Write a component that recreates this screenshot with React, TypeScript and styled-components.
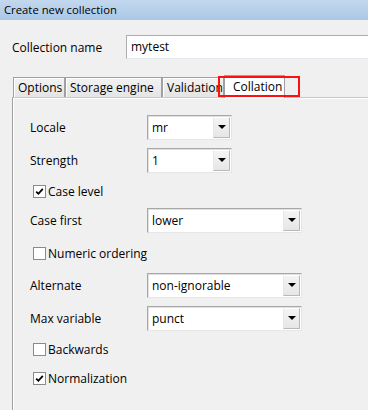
import React from "react";
import styled, { createGlobalStyle } from "styled-components";

const GlobalStyle = createGlobalStyle`
  html, body { margin: 0; padding: 0; background: #ffffff; }
  body { font-family: "Open Sans", "Liberation Sans", Arial, sans-serif; color: #000; }
`;

const Window = styled.div`
  width: 368px;
  height: 410px;
  background: #f0f0f0;
  overflow: hidden;
  font-size: 12px;
`;

const TitleBar = styled.div`
  height: 20px;
  line-height: 19px;
  padding-left: 4px;
  font-size: 11.3px;
  background: linear-gradient(#c3d8ee, #aac7e6);
`;

const NameRow = styled.div`
  display: flex;
  align-items: center;
  margin-top: 15px;
  height: 24px;
  padding-left: 12px;
`;

const NameLabel = styled.span`
  width: 114px;
  flex: none;
`;

const TextInput = styled.div`
  flex: none;
  width: 270px;
  height: 22px;
  line-height: 22px;
  padding-left: 4px;
  background: #fff;
  border: 1px solid;
  border-color: #abadb3 #e3e9ef #e3e9ef #abadb3;
`;

const TabArea = styled.div`
  margin-top: 16px;
`;

const TabStrip = styled.div`
  position: relative;
  display: flex;
  align-items: flex-end;
  height: 22px;
  padding-left: 13px;
`;

const Tab = styled.div<{ $w: number; $active?: boolean }>`
  box-sizing: border-box;
  flex: none;
  width: ${(p) => p.$w}px;
  height: ${(p) => (p.$active ? 23 : 20)}px;
  margin-bottom: ${(p) => (p.$active ? -1 : 0)}px;
  padding: ${(p) => (p.$active ? "2px 0 0 8px" : "1px 0 0 4px")};
  line-height: 17px;
  white-space: nowrap;
  overflow: hidden;
  border: 1px solid #a0a0a0;
  border-bottom: none;
  background: ${(p) => (p.$active ? "#ffffff" : "linear-gradient(#f3f3f3, #e4e4e4)")};
  box-shadow: ${(p) => (p.$active ? "none" : "inset 1px 1px 0 #ffffff")};
  position: relative;
  z-index: ${(p) => (p.$active ? 2 : 1)};
`;

const Highlight = styled.div`
  position: absolute;
  left: 218px;
  top: 1px;
  width: 82px;
  height: 21px;
  box-sizing: border-box;
  border: 2px solid #ff1010;
  z-index: 3;
  pointer-events: none;
`;

const Pane = styled.div`
  margin-left: 12px;
  width: 400px;
  height: 320px;
  border: 1px solid #a0a0a0;
  border-top-color: #c8c8c8;
  box-shadow: inset 1px 1px 0 #ffffff;
  padding: 17px 0 0 17px;
`;

const Row = styled.div<{ $gap: number }>`
  display: flex;
  align-items: center;
  height: 24px;
  margin-top: ${(p) => p.$gap}px;
`;

const FieldLabel = styled.span`
  width: 117px;
  flex: none;
`;

const Combo = styled.div<{ $w: number }>`
  box-sizing: border-box;
  width: ${(p) => p.$w}px;
  height: 25px;
  display: flex;
  align-items: stretch;
  background: #fff;
  border: 1px solid;
  border-color: #a8a8a8 #e6e6e6 #e6e6e6 #a8a8a8;
  box-shadow: inset 1px 1px 0 #e0e0e0;
`;

const ComboText = styled.span`
  flex: 1;
  padding-left: 4px;
  line-height: 23px;
`;

const ComboButton = styled.span`
  width: 15px;
  margin: 1px 1px 1px 0;
  background: linear-gradient(#f4f4f4, #e6e6e6);
  border: 1px solid;
  border-color: #ffffff #b8b8b8 #b8b8b8 #e8e8e8;
  display: flex;
  align-items: center;
  justify-content: center;
`;

const Arrow = styled.span`
  width: 0;
  height: 0;
  border-left: 4px solid transparent;
  border-right: 4px solid transparent;
  border-top: 4px solid #000;
`;

const CheckRow = styled(Row)`
  padding-left: 3px;
`;

const Box = styled.span`
  box-sizing: border-box;
  width: 13px;
  height: 13px;
  margin-right: 2px;
  background: #fff;
  border: 1px solid #8a8a8a;
  display: flex;
  align-items: center;
  justify-content: center;
`;

const ComboField = ({ label, value, width, gap }: { label: string; value: string; width: number; gap: number }) => (
  <Row $gap={gap}>
    <FieldLabel>{label}</FieldLabel>
    <Combo $w={width}>
      <ComboText>{value}</ComboText>
      <ComboButton>
        <Arrow />
      </ComboButton>
    </Combo>
  </Row>
);

const Check = ({ label, checked, gap }: { label: string; checked?: boolean; gap: number }) => (
  <CheckRow $gap={gap}>
    <Box>
      {checked && (
        <svg width="9" height="9" viewBox="0 0 9 9">
          <path d="M1.2 4.6 L3.4 6.8 L7.8 1.8" fill="none" stroke="#000" strokeWidth="1.8" />
        </svg>
      )}
    </Box>
    <span>{label}</span>
  </CheckRow>
);

export default function App() {
  return (
    <>
      <GlobalStyle />
      <Window>
        <TitleBar>Create new collection</TitleBar>
        <NameRow>
          <NameLabel>Collection name</NameLabel>
          <TextInput>mytest</TextInput>
        </NameRow>
        <TabArea>
          <TabStrip>
            <Tab $w={52}>Options</Tab>
            <Tab $w={97}>Storage engine</Tab>
            <Tab $w={62}>Validation</Tab>
            <Tab $w={61} $active>Collation</Tab>
            <Highlight />
          </TabStrip>
          <Pane>
            <ComboField label="Locale" value="mr" width={85} gap={0} />
            <ComboField label="Strength" value="1" width={85} gap={9} />
            <Check label="Case level" checked gap={7} />
            <ComboField label="Case first" value="lower" width={155} gap={5} />
            <Check label="Numeric ordering" gap={9} />
            <ComboField label="Alternate" value="non-ignorable" width={155} gap={8} />
            <ComboField label="Max variable" value="punct" width={155} gap={9} />
            <Check label="Backwards" gap={7} />
            <Check label="Normalization" checked gap={5} />
          </Pane>
        </TabArea>
      </Window>
    </>
  );
}
